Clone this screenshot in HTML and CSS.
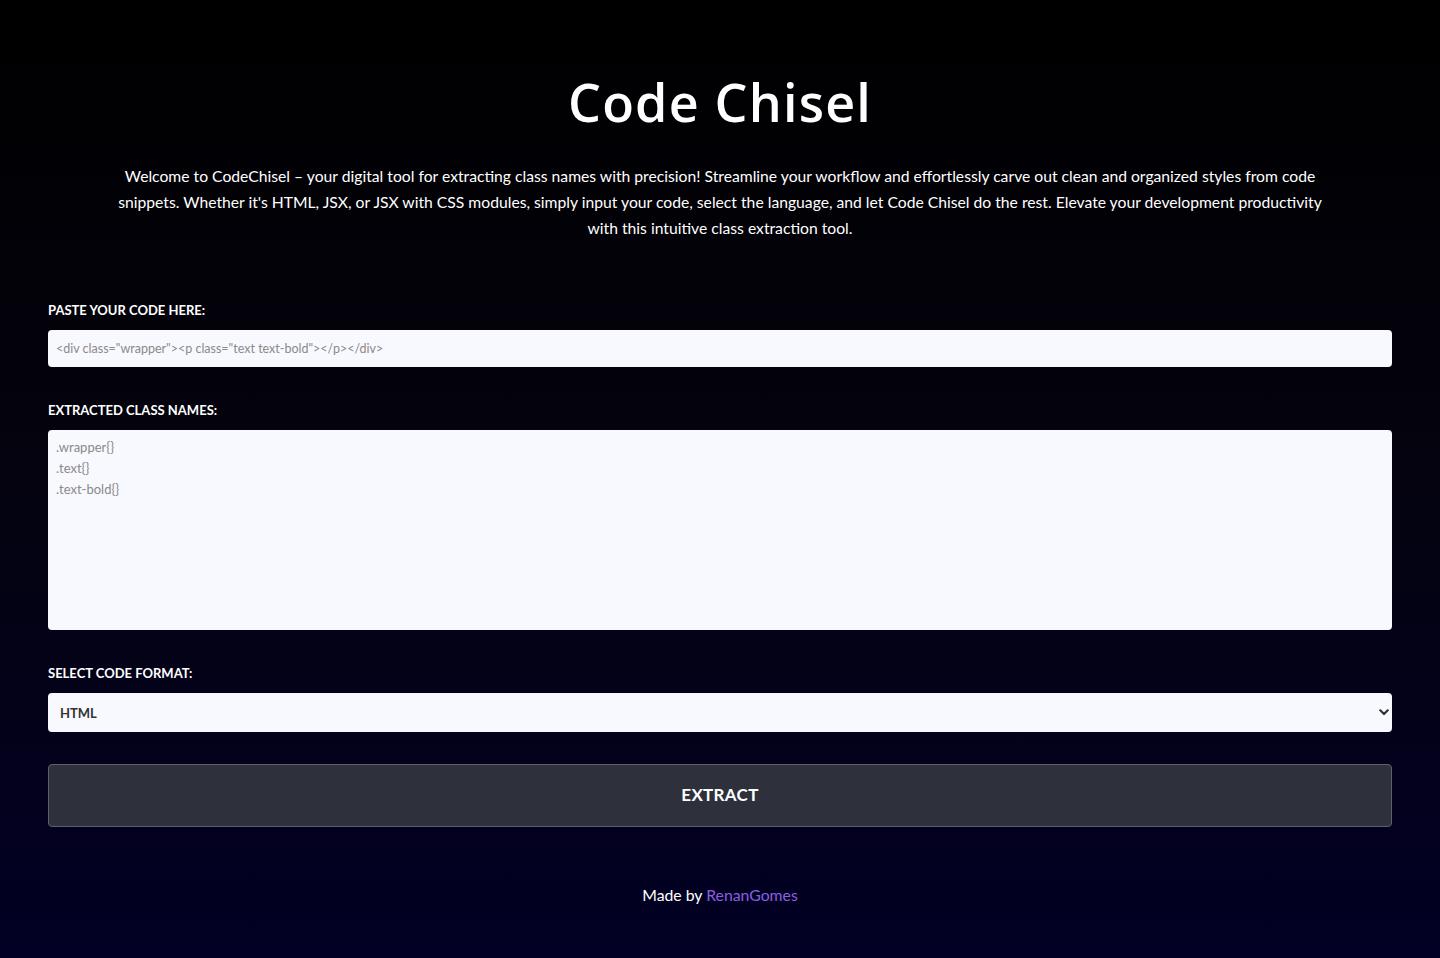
FILE: index.html
```html
<!DOCTYPE html>
<html lang="en">
<head>
<meta charset="utf-8">
<title>Code Chisel</title>
<link rel="stylesheet" href="styles.css">
</head>
<body>
<main class="page">
  <header class="hero">
    <h1 class="title">Code Chisel</h1>
    <p class="intro">Welcome to CodeChisel – your digital tool for extracting class names with precision! Streamline your workflow and effortlessly carve out clean and organized styles from code snippets. Whether it's HTML, JSX, or JSX with CSS modules, simply input your code, select the language, and let Code Chisel do the rest. Elevate your development productivity with this intuitive class extraction tool.</p>
  </header>
  <form class="form">
    <div class="field">
      <label class="label" for="code">Paste your code here:</label>
      <input class="input" id="code" type="text" placeholder="&lt;div class=&quot;wrapper&quot;&gt;&lt;p class=&quot;text text-bold&quot;&gt;&lt;/p&gt;&lt;/div&gt;">
    </div>
    <div class="field">
      <label class="label" for="out">Extracted class names:</label>
      <textarea class="output" id="out" placeholder=".wrapper{}
.text{}
.text-bold{}"></textarea>
    </div>
    <div class="field field-last">
      <label class="label" for="fmt">Select code format:</label>
      <div class="select-wrap">
        <select class="select" id="fmt">
          <option>HTML</option>
          <option>JSX</option>
          <option>JSX with CSS modules</option>
        </select>
        <svg class="chev" width="10" height="7" viewBox="0 0 10 7"><path d="M1.3 1.3 L5 5 L8.7 1.3" fill="none" stroke="#333" stroke-width="2.2" stroke-linecap="round" stroke-linejoin="round"/></svg>
      </div>
    </div>
    <button class="button" type="button">EXTRACT</button>
  </form>
  <footer class="footer">Made by <a class="link" href="#">RenanGomes</a></footer>
</main>
</body>
</html>
```
FILE: styles.css
```css
* { box-sizing: border-box; }
html, body { margin: 0; padding: 0; }
body {
  min-height: 958px;
  background: linear-gradient(to bottom, #000000 0%, #04030f 50%, #020024 100%);
  color: #ffffff;
  font-family: "Lato", "Liberation Sans", sans-serif;
}
.page {
  padding: 0 48px;
  display: flex;
  flex-direction: column;
}
.hero {
  display: flex;
  flex-direction: column;
  align-items: center;
  padding-top: 70px;
}
.title {
  margin: 0;
  font-family: "Open Sans", sans-serif;
  font-weight: 600;
  font-size: 52px;
  line-height: 64px;
  letter-spacing: 1.2px;
}
.intro {
  margin: 29px 0 0;
  max-width: 1210px;
  text-align: center;
  font-size: 15.7px;
  line-height: 26px;
}
.form {
  display: flex;
  flex-direction: column;
  margin-top: 61px;
}
.field {
  display: flex;
  flex-direction: column;
  margin-bottom: 35px;
}
.field-last { margin-bottom: 32px; }
.label {
  font-size: 13px;
  font-weight: 700;
  text-transform: uppercase;
  line-height: 16px;
  margin-bottom: 12px;
}
.input, .output, .select {
  width: 100%;
  border: none;
  border-radius: 4px;
  background: #f8f8ff;
  font-family: inherit;
  font-size: 13px;
  color: #333;
  outline: none;
}
.input {
  height: 37px;
  padding: 0 8px;
  font-size: 12.5px;
}
.input::placeholder, .output::placeholder { color: #8a8a8a; }
.output {
  height: 200px;
  padding: 7px 8px;
  line-height: 21px;
  resize: none;
  display: block;
}
.select-wrap { position: relative; }
.select {
  display: block;
  height: 39px;
  padding: 0 12px;
  appearance: none;
  -webkit-appearance: none;
  font-weight: 700;
  color: #333;
}
.chev {
  position: absolute;
  right: 3px;
  top: 16px;
  pointer-events: none;
}
.button {
  height: 63px;
  padding: 0 0 3px;
  background: #2e313b;
  border: 1px solid #5d6069;
  border-radius: 4px;
  color: #fff;
  font-family: inherit;
  font-size: 17px;
  font-weight: 700;
  letter-spacing: 0.3px;
}
.footer {
  margin-top: 58px;
  text-align: center;
  font-size: 15.8px;
  line-height: 20px;
}
.link { color: #8a5fe0; text-decoration: none; }
```
